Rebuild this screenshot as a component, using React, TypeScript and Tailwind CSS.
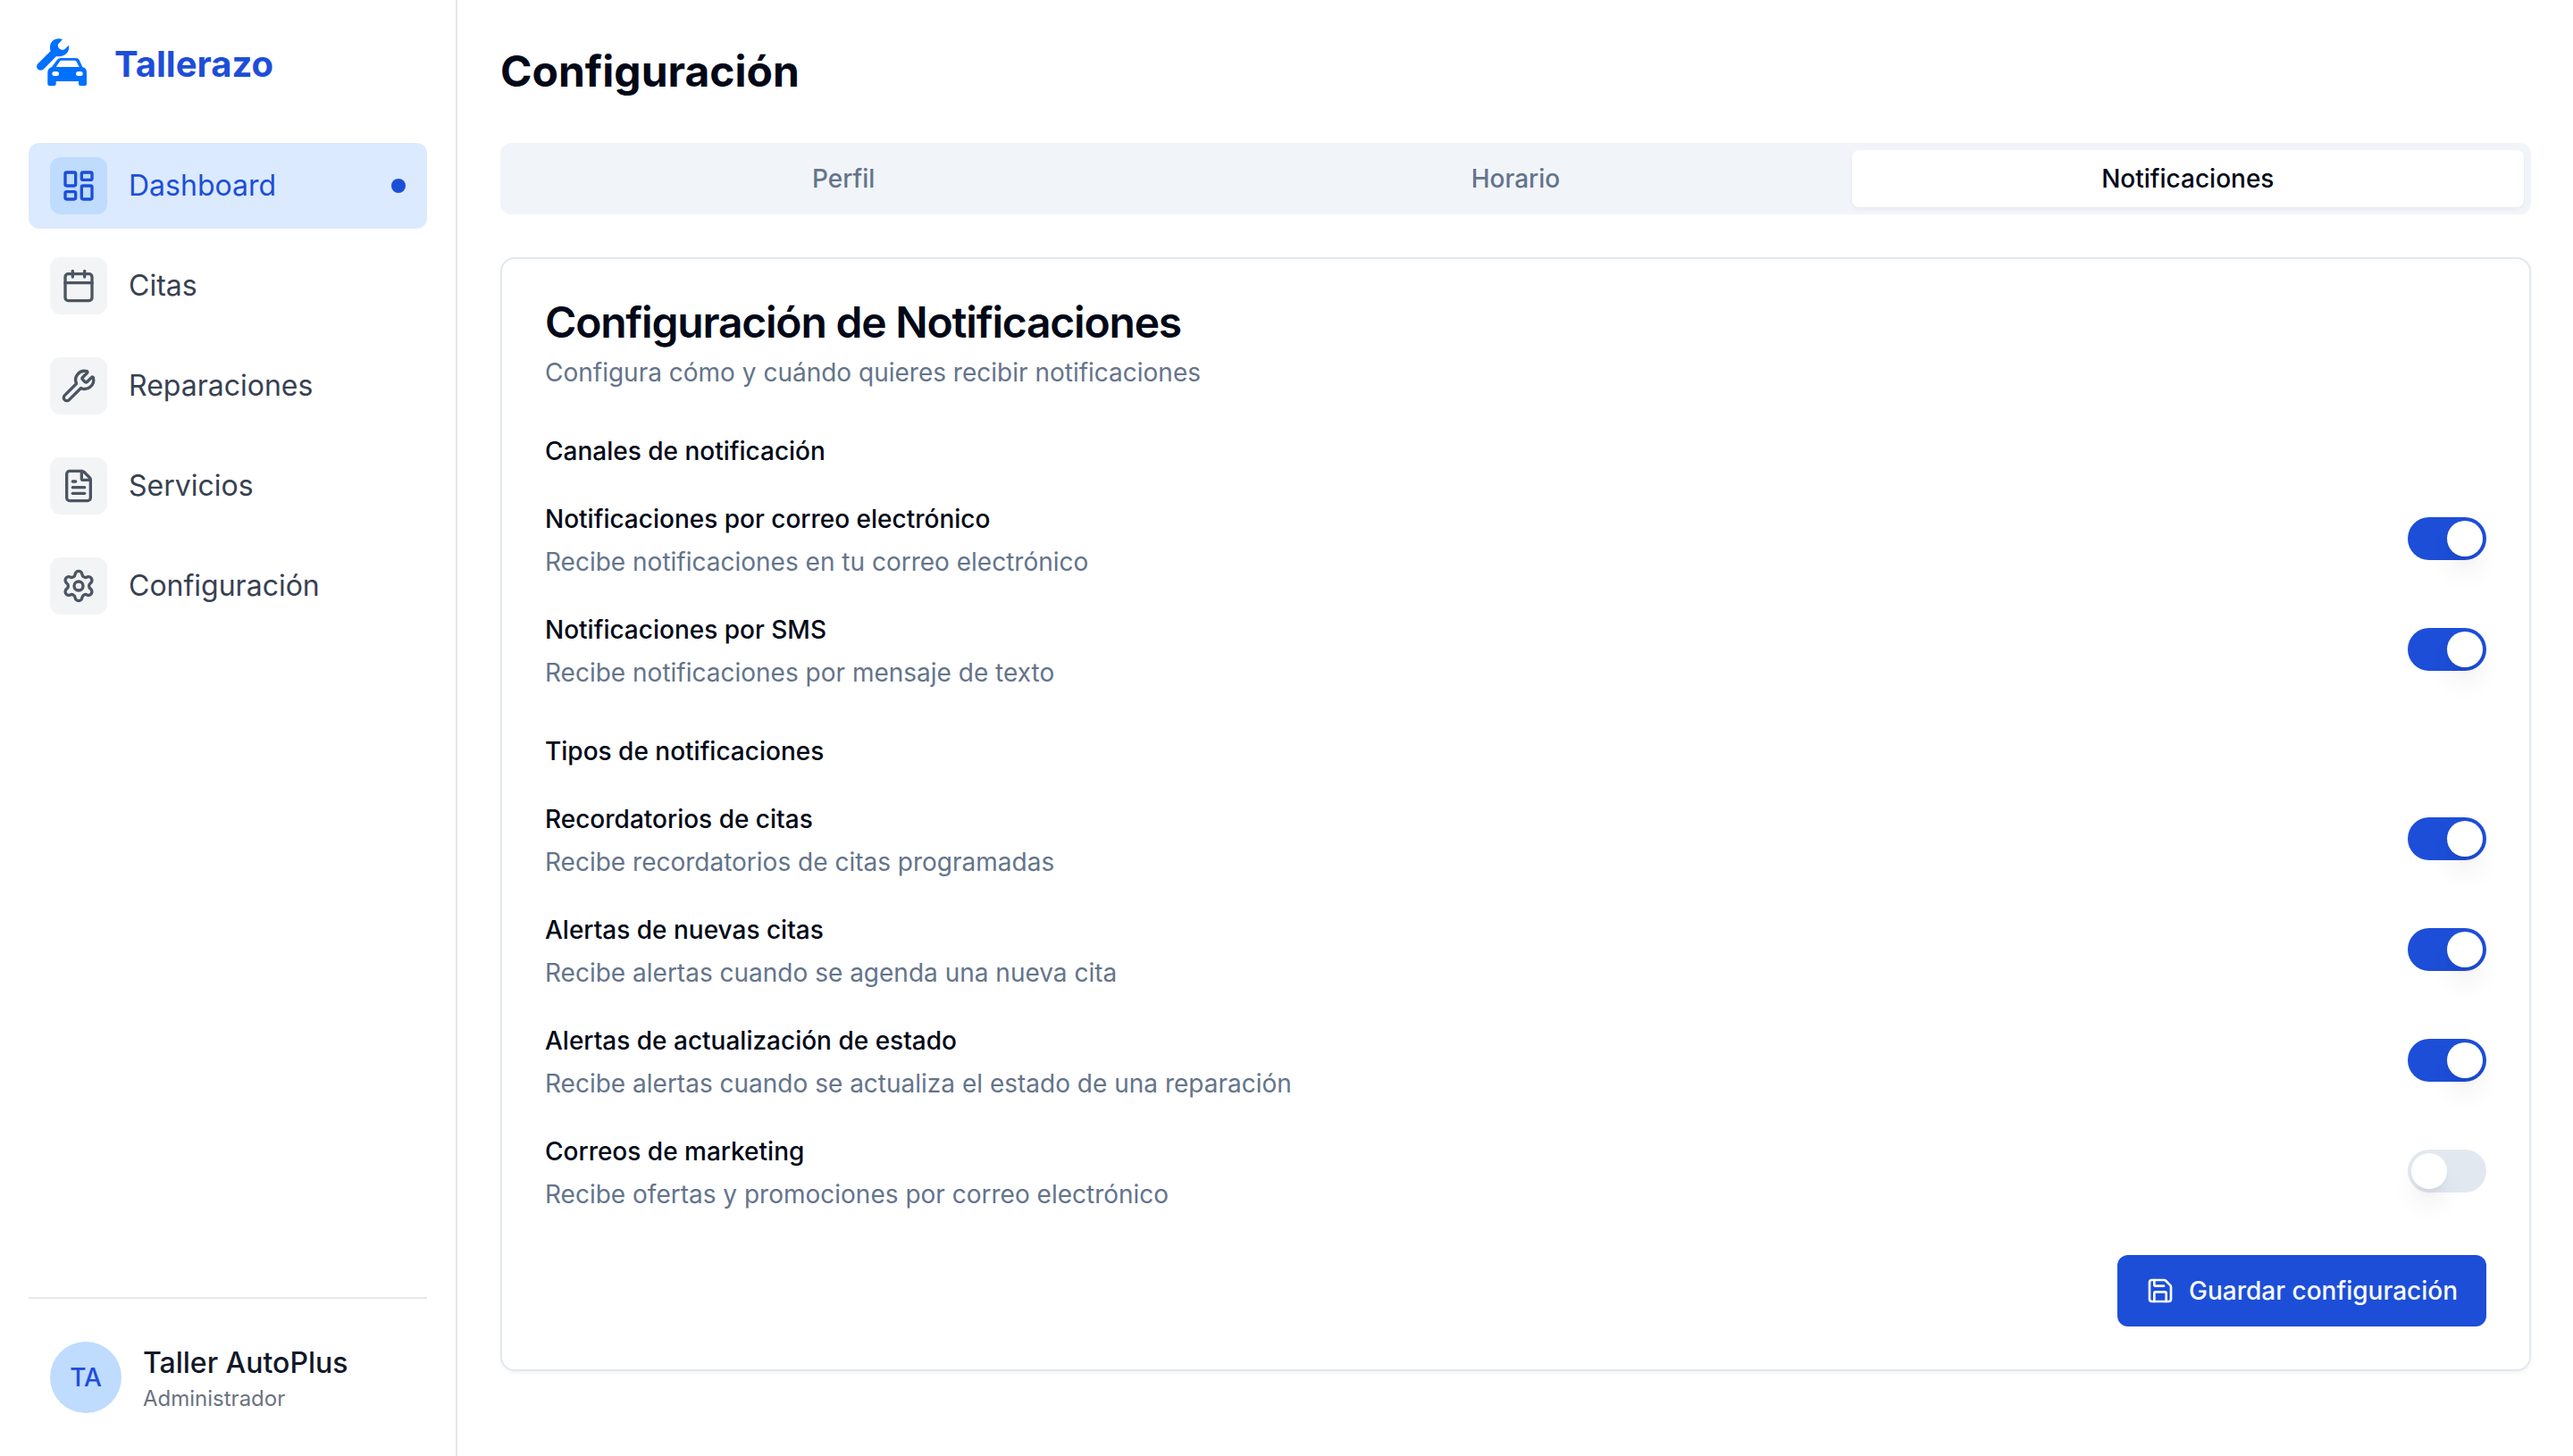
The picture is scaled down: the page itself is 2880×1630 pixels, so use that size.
import { Calendar, FileText, LayoutDashboard, Save, Settings, Wrench } from "lucide-react";
import type { LucideIcon } from "lucide-react";

type NavItem = { label: string; icon: LucideIcon; active?: boolean };
type Setting = { id: string; title: string; description: string; on: boolean };

const navItems: NavItem[] = [
  { label: "Dashboard", icon: LayoutDashboard, active: true },
  { label: "Citas", icon: Calendar },
  { label: "Reparaciones", icon: Wrench },
  { label: "Servicios", icon: FileText },
  { label: "Configuración", icon: Settings },
];

const tabs = ["Perfil", "Horario", "Notificaciones"];

const channels: Setting[] = [
  { id: "email", title: "Notificaciones por correo electrónico", description: "Recibe notificaciones en tu correo electrónico", on: true },
  { id: "sms", title: "Notificaciones por SMS", description: "Recibe notificaciones por mensaje de texto", on: true },
];

const types: Setting[] = [
  { id: "reminders", title: "Recordatorios de citas", description: "Recibe recordatorios de citas programadas", on: true },
  { id: "new", title: "Alertas de nuevas citas", description: "Recibe alertas cuando se agenda una nueva cita", on: true },
  { id: "status", title: "Alertas de actualización de estado", description: "Recibe alertas cuando se actualiza el estado de una reparación", on: true },
  { id: "marketing", title: "Correos de marketing", description: "Recibe ofertas y promociones por correo electrónico", on: false },
];

function Logo() {
  return (
    <svg viewBox="0 0 80 80" className="size-20 shrink-0" fill="#0070ff" aria-hidden="true">
      <path d="M38 12 C31 9.200 24 13.500 24 20.500 C24 22.500 24.200 24 24.500 25.300 L10.500 39.200 C6.500 43.500 12 49.500 17 45.300 L31 31 C39.500 32.500 46.500 27 45 18.800 L40.500 23 C37.500 25.500 31.500 22 33 17.500 Z" />
      <path
        fillRule="evenodd"
        d="M35.500 33 H53 Q55.500 33 56.800 35.300 L60.300 43 Q65 44 65 49 V62 Q65 64 63 64 H58 Q56 64 56 62 V59 H30.700 V62 Q30.700 64 28.700 64 H23.300 Q21.300 64 21.300 62 V49 Q21.300 44.500 26 43 L31.500 35.500 Q33 33 35.500 33 Z M37 35.800 Q35.500 35.800 34.700 37 L30.700 43 H56.700 L53.600 37 Q53 35.800 51.500 35.800 Z M28.800 48 A2.500 2.500 0 0 0 28.800 53 H31.500 A2.500 2.500 0 0 0 31.500 48 Z M55.500 48 A2.500 2.500 0 0 0 55.500 53 H58.200 A2.500 2.500 0 0 0 58.200 48 Z"
      />
    </svg>
  );
}

function SettingRow({ item }: { item: Setting }) {
  return (
    <div className="flex items-center justify-between">
      <div className="flex flex-col gap-1">
        <label htmlFor={item.id} className="text-[28px] leading-12 font-medium">
          {item.title}
        </label>
        <p className="text-[28px] leading-10 text-[#64748b]">{item.description}</p>
      </div>
      <input
        id={item.id}
        type="checkbox"
        role="switch"
        defaultChecked={item.on}
        className="flex h-12 w-22 shrink-0 cursor-pointer appearance-none items-center rounded-full bg-[#e2e8f0] p-1 before:size-10 before:rounded-full before:bg-white before:shadow-[0_20px_30px_-6px_rgba(0,0,0,0.1),0_8px_12px_-8px_rgba(0,0,0,0.1)] checked:bg-[#1d4ed8] checked:before:translate-x-10"
      />
    </div>
  );
}

function SettingGroup({ title, items }: { title: string; items: Setting[] }) {
  return (
    <section className="flex flex-col gap-8">
      <h3 className="text-[28px] leading-10 font-medium">{title}</h3>
      {items.map((item) => (
        <SettingRow key={item.id} item={item} />
      ))}
    </section>
  );
}

function Sidebar() {
  return (
    <aside className="flex w-128 shrink-0 flex-col border-r-2 border-[#e5e7eb] p-8">
      <div className="mb-12 flex items-center gap-4">
        <Logo />
        <span className="text-[40px] leading-14 font-bold text-[#1d4ed8]">Tallerazo</span>
      </div>
      <nav className="flex flex-col gap-4">
        {navItems.map(({ label, icon: Icon, active }) => (
          <a
            key={label}
            href="#"
            className={
              active
                ? "flex items-center gap-6 rounded-xl bg-[#dbeafe] px-6 py-4 text-[#1d4ed8]"
                : "flex items-center gap-6 rounded-xl px-6 py-4 text-[#374151]"
            }
          >
            <span
              className={
                active
                  ? "rounded-xl bg-[#bfdbfe] p-3 text-[#1d4ed8]"
                  : "rounded-xl bg-[#f3f4f6] p-3 text-[#4b5563]"
              }
            >
              <Icon className="size-10" />
            </span>
            <span className="text-[32px] leading-12">{label}</span>
            {active && <span className="ml-auto size-4 rounded-full bg-[#1d4ed8]" />}
          </a>
        ))}
      </nav>
      <div className="mt-auto border-t-2 border-[#e5e7eb] pt-8">
        <div className="flex items-center gap-6 px-6 py-4">
          <div className="flex size-20 items-center justify-center rounded-full bg-[#bfdbfe] text-[28px] leading-10 font-medium text-[#1d4ed8]">
            TA
          </div>
          <div>
            <p className="text-[32px] leading-12 font-medium text-[#111827]">Taller AutoPlus</p>
            <p className="text-2xl text-[#6b7280]">Administrador</p>
          </div>
        </div>
      </div>
    </aside>
  );
}

export default function App() {
  return (
    <div className="flex min-h-screen bg-white font-[Inter,sans-serif] text-[#020817]">
      <Sidebar />
      <main className="min-w-0 flex-1 p-12 pr-[47px]">
        <h1 className="mb-12 text-5xl leading-16 font-bold">Configuración</h1>
        <div role="tablist" className="mb-12 grid grid-cols-3 rounded-xl bg-[#f1f5f9] p-2 text-[#64748b]">
          {tabs.map((tab) => (
            <button
              key={tab}
              type="button"
              role="tab"
              aria-selected={tab === "Notificaciones"}
              className="rounded-lg py-3 text-[28px] leading-10 font-medium aria-selected:bg-white aria-selected:text-[#020817] aria-selected:shadow-[0_2px_4px_rgba(0,0,0,0.05)]"
            >
              {tab}
            </button>
          ))}
        </div>
        <div className="flex flex-col gap-12 rounded-2xl border-2 border-[#e2e8f0] p-12 pt-[47px] shadow-[0_2px_4px_rgba(0,0,0,0.05)]">
          <header className="flex flex-col gap-3">
            <h2 className="text-5xl leading-12 font-semibold tracking-tight">Configuración de Notificaciones</h2>
            <p className="text-[28px] leading-10 text-[#64748b]">Configura cómo y cuándo quieres recibir notificaciones</p>
          </header>
          <SettingGroup title="Canales de notificación" items={channels} />
          <SettingGroup title="Tipos de notificaciones" items={types} />
          <button
            type="button"
            className="flex items-center gap-4 self-end rounded-xl bg-[#1d4ed8] px-8 py-5 text-[28px] leading-10 font-medium text-[#f8fafc]"
          >
            <Save className="size-8" />
            Guardar configuración
          </button>
        </div>
      </main>
    </div>
  );
}
